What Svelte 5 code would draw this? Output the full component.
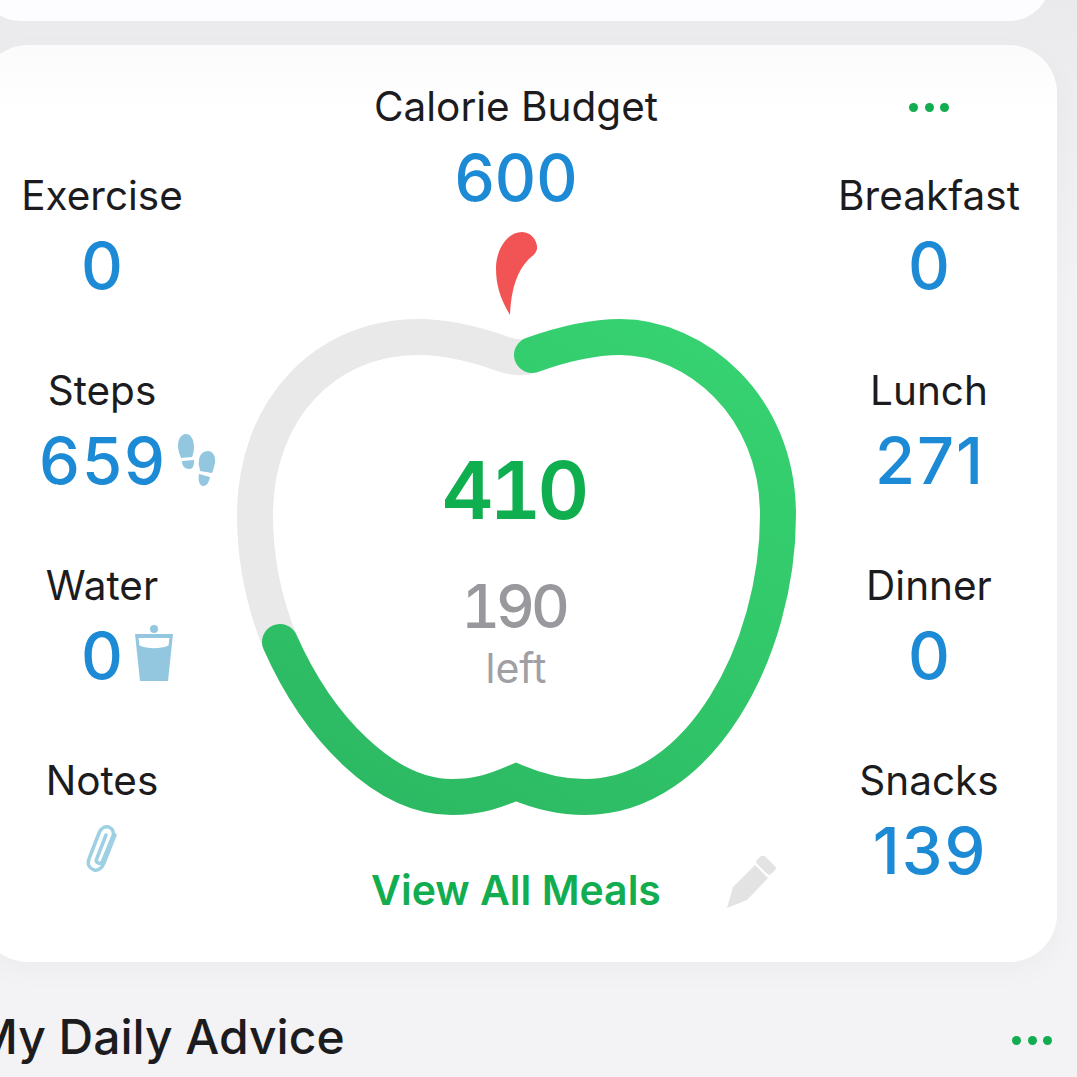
<script>
	const leftStats = [
		{ label: "Exercise", value: 0 },
		{ label: "Steps", value: 659, icon: "steps" },
		{ label: "Water", value: 0, icon: "water" },
		{ label: "Notes", icon: "clip" },
	];
	const rightStats = [
		{ label: "Breakfast", value: 0 },
		{ label: "Lunch", value: 271 },
		{ label: "Dinner", value: 0 },
		{ label: "Snacks", value: 139 },
	];
</script>

{#snippet stat(item)}
	<div class="stat">
		<div class="stat-label">{item.label}</div>
		<div class="stat-value">
			{#if item.value !== undefined}
				<span class="number">
					{item.value}
					{#if item.icon === "steps"}
						<svg class="icon steps" width="42" height="56" viewBox="0 0 42 56">
							<path d="M9 1c5 0 8 6 8 13 0 4-1 8-2 10l-11 1c-1-3-3-7-3-12C1 6 4 1 9 1Z" />
							<path d="M5 28l12-1c0 4 0 9-5 9-5 0-7-4-7-8Z" />
							<path d="M31 18c5 0 8 6 7 12-1 4-2 8-3 10l-12-2c0-3-2-6-1-10 0-6 4-10 9-10Z" />
							<path d="M22 41l11 3c-1 5-3 9-7 9-4 0-5-7-4-12Z" />
						</svg>
					{:else if item.icon === "water"}
						<svg class="icon water" width="40" height="58" viewBox="0 0 40 58">
							<circle cx="20" cy="6" r="4" />
							<path d="M1 11h38l-5 47H6ZM4.5 15l1 7.5c8 3.5 21 3.5 29 0l1-7.5Z" fill-rule="evenodd" />
						</svg>
					{/if}
				</span>
			{:else}
				<svg class="clip" width="36" height="50" viewBox="0 0 36 50">
					<path d="M31 11 20 39c-2 5-6 8-10 7-5-2-7-6-5-11L15 9c2-5 6-7 10-6 4 2 5 6 4 9L19 36c-1 3-3 4-5 3-2-1-2-3-1-5l9-23" />
				</svg>
			{/if}
		</div>
	</div>
{/snippet}

<div class="page">
	<div class="top-card"></div>

	<section class="card">
		<div class="side">
			{#each leftStats as item}
				{@render stat(item)}
			{/each}
		</div>

		<div class="center">
			<div class="title">Calorie Budget</div>
			<div class="budget">600</div>

			<div class="apple">
				<svg width="584" height="600" viewBox="224 225 584 600">
					<defs>
						<linearGradient id="ring" gradientUnits="userSpaceOnUse" x1="640" y1="310" x2="380" y2="800">
							<stop offset="0" stop-color="#36d170" />
							<stop offset="0.4" stop-color="#32c96b" />
							<stop offset="1" stop-color="#2cb963" />
						</linearGradient>
					</defs>
					<path class="leaf" d="M510 315C500 298 496 285 496 268 496 250 507 232 522 232 532 232 538 242 537 249 536 254 532 256 528 260 518 270 511 288 510 315Z" />
					<path class="track" d="M280 642C265 605 255 560 255 515 255 410 325 337 418 337 450 337 478 345 503 354 515 358 525 358 532 355" />
					<path class="progress" d="M532 355C560 345 590 337 620 337 695 337 778 405 778 515 778 650 700 797 585 797 560 797 537 791 516 782 495 791 478 797 452 797 385 797 318 728 280 642" />
				</svg>
				<div class="remaining">
					<div class="eaten">410</div>
					<div class="left-num">190</div>
					<div class="left-text">left</div>
				</div>
			</div>

			<div class="meals">
				<span>View All Meals</span>
				<svg class="pencil" width="50" height="54" viewBox="0 0 50 54">
					<path d="M1 52 7 31 29 9 42 22 21 44Z" />
					<rect x="30" y="3.5" width="20" height="11" rx="3" transform="rotate(45 40 9)" />
				</svg>
			</div>
		</div>

		<div class="side right">
			<div class="dots"><i></i><i></i><i></i></div>
			{#each rightStats as item}
				{@render stat(item)}
			{/each}
		</div>
	</section>

	<div class="section-head">
		<h2>My Daily Advice</h2>
		<div class="dots"><i></i><i></i><i></i></div>
	</div>
</div>

<style>
	:global(body) {
		background: #f3f2f5;
	}

	.page {
		width: 1077px;
		height: 1077px;
		overflow: hidden;
		font-family: Inter, "Liberation Sans", sans-serif;
		color: #1c1c1e;
		background: linear-gradient(#eae9ec 0, #ecebee 50px, #f3f2f5 300px);
	}

	.top-card {
		width: 1070px;
		height: 81px;
		margin: -60px 0 0 -20px;
		background: #fdfcfe;
		border-radius: 55px;
	}

	.card {
		display: grid;
		grid-template-columns: 244px 584px 242px;
		width: 1077px;
		margin: 24px 0 0 -20px;
		background: linear-gradient(#fbfbfb, #fff 70px);
		border-radius: 48px;
		box-shadow: 0 8px 30px rgba(0, 0, 0, 0.03);
	}

	.side {
		padding-top: 127px;
	}

	.side.right {
		padding-top: 56px;
	}

	.side.right .dots {
		align-items: center;
		height: 12px;
		margin-bottom: 59px;
	}

	.stat {
		height: 195px;
		text-align: center;
	}

	.stat-label {
		font-size: 40.5px;
		line-height: 48px;
	}

	.stat-value {
		margin-top: 8px;
		font-size: 65px;
		font-weight: 500;
		line-height: 76px;
		letter-spacing: 2px;
		color: #1c8ad4;
	}

	.number {
		position: relative;
		display: inline-block;
		padding-left: 2px;
	}

	.icon {
		position: absolute;
		fill: #93c7e0;
	}

	.icon.steps {
		left: calc(100% + 10px);
		top: 10px;
	}

	.icon.water {
		left: calc(100% + 9px);
		top: 5px;
	}

	.clip {
		display: block;
		margin: 19px auto 0;
		fill: none;
		stroke: #9dd0e2;
		stroke-width: 3.5;
		stroke-linecap: round;
	}

	.center {
		padding: 38px 0 48px;
		text-align: center;
	}

	.title {
		font-size: 40.5px;
		line-height: 48px;
	}

	.budget {
		margin-top: 9px;
		font-size: 64px;
		font-weight: 500;
		line-height: 76px;
		color: #1c8ad4;
	}

	.apple {
		position: relative;
		height: 600px;
		margin-top: 9px;
	}

	.apple svg {
		display: block;
	}

	.leaf {
		fill: #f25455;
	}

	.track,
	.progress {
		fill: none;
		stroke-width: 36;
		stroke-linecap: round;
	}

	.track {
		stroke: #e9e9ea;
		stroke-linecap: butt;
	}

	.progress {
		stroke: url(#ring);
	}

	.remaining {
		position: absolute;
		inset: 220px 0 0;
	}

	.eaten {
		margin-left: -5px;
		font-size: 80px;
		font-variant-numeric: tabular-nums;
		font-weight: 600;
		line-height: 90px;
		letter-spacing: -4px;
		color: #0fae4f;
	}

	.left-num {
		margin: 38px 0 0 -5px;
		font-size: 60px;
		font-variant-numeric: tabular-nums;
		font-weight: 500;
		line-height: 66px;
		letter-spacing: -4px;
		color: #98989d;
	}

	.left-text {
		margin-top: 4px;
		font-size: 41px;
		line-height: 50px;
		color: #a0a0a4;
	}

	.meals {
		position: relative;
		margin-top: 41px;
		font-size: 41px;
		font-weight: 600;
		line-height: 48px;
		color: #12ad50;
	}

	.pencil {
		position: absolute;
		left: 502px;
		top: -10px;
		fill: #e3e3e3;
	}

	.dots {
		display: flex;
		justify-content: center;
		gap: 6.5px;
	}

	.dots i {
		width: 9px;
		height: 9px;
		border-radius: 50%;
		background: #12ad50;
	}

	.section-head {
		display: flex;
		justify-content: space-between;
		align-items: center;
		margin: 45px 25px 0 -26px;
	}

	.section-head .dots {
		margin-top: 6px;
	}

	.section-head h2 {
		margin: 0;
		font-size: 48px;
		font-weight: 450;
		line-height: 60px;
	}
</style>
